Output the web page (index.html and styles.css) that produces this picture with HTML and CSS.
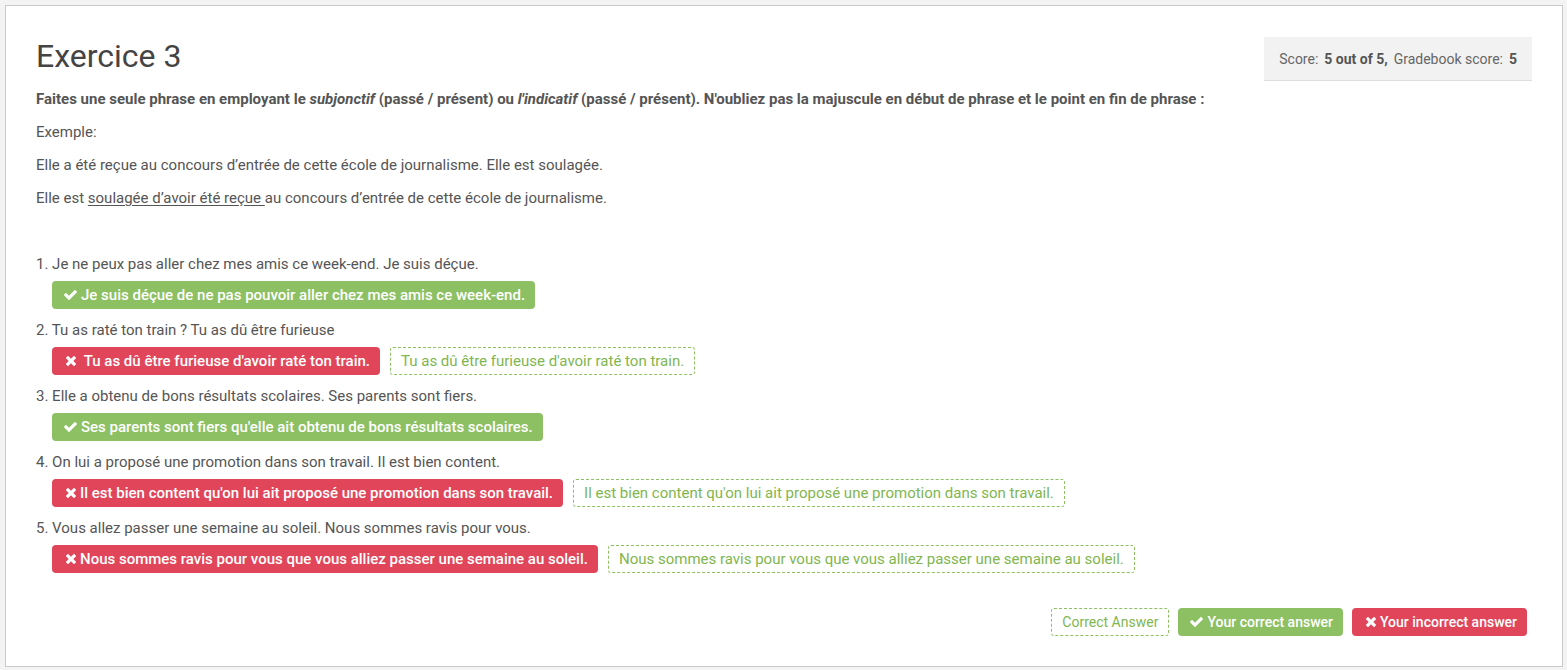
FILE: index.html
```html
<!DOCTYPE html>
<html lang="fr">
<head>
    <meta charset="UTF-8">
    <title>Exercice 3</title>
    <link rel="stylesheet" href="styles.css">
</head>
<body>
    <div class="frame">
        <div class="header">
            <h2 class="title">Exercice 3</h2>
            <div class="score">
                <span>Score:</span> <b>5 out of 5,</b> <span>Gradebook score:</span> <b>5</b>
            </div>
        </div>

        <p><strong>Faites une seule phrase en employant le <em>subjonctif</em> (passé / présent) ou <em>l'indicatif</em> (passé / présent). N'oubliez pas la majuscule en début de phrase et le point en fin de phrase :</strong></p>
        <p>Exemple:</p>
        <p>Elle a été reçue au concours d’entrée de cette école de journalisme. Elle est soulagée.</p>
        <p>Elle est <u>soulagée d’avoir été reçue </u>au concours d’entrée de cette école de journalisme.</p>
        <p>&nbsp;</p>

        <div class="questions">
            <div class="question">
                <div class="prompt">1. Je ne peux pas aller chez mes amis ce week-end. Je suis déçue.</div>
                <div class="answers">
                    <span class="badge correct">
                        <svg class="icon-check" viewBox="121 334 1550 1188"><path d="M1671 566q0 40-28 68l-724 724-136 136q-28 28-68 28t-68-28l-136-136-362-362q-28-28-28-68t28-68l136-136q28-28 68-28t68 28l294 295 656-657q28-28 68-28t68 28l136 136q28 28 28 68z"/></svg>Je suis déçue de ne pas pouvoir aller chez mes amis ce week-end.
                    </span>
                </div>
            </div>

            <div class="question">
                <div class="prompt">2. Tu as raté ton train ? Tu as dû être furieuse</div>
                <div class="answers">
                    <span class="badge wrong">
                        <svg class="icon-times" viewBox="302 366 1188 1188"><path d="M1490 1322q0 40-28 68l-136 136q-28 28-68 28t-68-28l-294-294-294 294q-28 28-68 28t-68-28l-136-136q-28-28-28-68t28-68l294-294-294-294q-28-28-28-68t28-68l136-136q28-28 68-28t68 28l294 294 294-294q28-28 68-28t68 28l136 136q28 28 28 68t-28 68l-294 294 294 294q28 28 28 68z"/></svg>&nbsp;Tu as dû être furieuse d'avoir raté ton train.
                    </span>
                    <span class="solution">Tu as dû être furieuse d'avoir raté ton train.</span>
                </div>
            </div>

            <div class="question">
                <div class="prompt">3. Elle a obtenu de bons résultats scolaires. Ses parents sont fiers.</div>
                <div class="answers">
                    <span class="badge correct">
                        <svg class="icon-check" viewBox="121 334 1550 1188"><path d="M1671 566q0 40-28 68l-724 724-136 136q-28 28-68 28t-68-28l-136-136-362-362q-28-28-28-68t28-68l136-136q28-28 68-28t68 28l294 295 656-657q28-28 68-28t68 28l136 136q28 28 28 68z"/></svg>Ses parents sont fiers qu'elle ait obtenu de bons résultats scolaires.
                    </span>
                </div>
            </div>

            <div class="question">
                <div class="prompt">4. On lui a proposé une promotion dans son travail. Il est bien content.</div>
                <div class="answers">
                    <span class="badge wrong">
                        <svg class="icon-times" viewBox="302 366 1188 1188"><path d="M1490 1322q0 40-28 68l-136 136q-28 28-68 28t-68-28l-294-294-294 294q-28 28-68 28t-68-28l-136-136q-28-28-28-68t28-68l294-294-294-294q-28-28-28-68t28-68l136-136q28-28 68-28t68 28l294 294 294-294q28-28 68-28t68 28l136 136q28 28 28 68t-28 68l-294 294 294 294q28 28 28 68z"/></svg>Il est bien content qu'on lui ait proposé une promotion dans son travail.
                    </span>
                    <span class="solution">Il est bien content qu'on lui ait proposé une promotion dans son travail.</span>
                </div>
            </div>

            <div class="question">
                <div class="prompt">5. Vous allez passer une semaine au soleil. Nous sommes ravis pour vous.</div>
                <div class="answers">
                    <span class="badge wrong">
                        <svg class="icon-times" viewBox="302 366 1188 1188"><path d="M1490 1322q0 40-28 68l-136 136q-28 28-68 28t-68-28l-294-294-294 294q-28 28-68 28t-68-28l-136-136q-28-28-28-68t28-68l294-294-294-294q-28-28-28-68t28-68l136-136q28-28 68-28t68 28l294 294 294-294q28-28 68-28t68 28l136 136q28 28 28 68t-28 68l-294 294 294 294q28 28 28 68z"/></svg>Nous sommes ravis pour vous que vous alliez passer une semaine au soleil.
                    </span>
                    <span class="solution">Nous sommes ravis pour vous que vous alliez passer une semaine au soleil.</span>
                </div>
            </div>
        </div>

        <div class="legend">
            <span class="solution">Correct Answer</span>
            <span class="badge correct">
                <svg class="icon-check" viewBox="121 334 1550 1188"><path d="M1671 566q0 40-28 68l-724 724-136 136q-28 28-68 28t-68-28l-136-136-362-362q-28-28-28-68t28-68l136-136q28-28 68-28t68 28l294 295 656-657q28-28 68-28t68 28l136 136q28 28 28 68z"/></svg>Your correct answer
            </span>
            <span class="badge wrong">
                <svg class="icon-times" viewBox="302 366 1188 1188"><path d="M1490 1322q0 40-28 68l-136 136q-28 28-68 28t-68-28l-294-294-294 294q-28 28-68 28t-68-28l-136-136q-28-28-28-68t28-68l294-294-294-294q-28-28-28-68t28-68l136-136q28-28 68-28t68 28l294 294 294-294q28-28 68-28t68 28l136 136q28 28 28 68t-28 68l-294 294 294 294q28 28 28 68z"/></svg>Your incorrect answer
            </span>
        </div>
    </div>
</body>
</html>
```

FILE: styles.css
```css
html, body {
    margin: 0;
    padding: 0;
    background-color: #F3F3F3;
    font-family: Roboto, "Liberation Sans", sans-serif;
    font-size: 15px;
    color: #555;
}

.frame {
    box-sizing: border-box;
    margin: 5px 4px 0 5px;
    height: 662px;
    padding: 31px 30px 30px 30px;
    background-color: #FFF;
    border: 1px solid #C9C9C9;
}

.header {
    display: flex;
    justify-content: space-between;
    align-items: flex-start;
    margin-bottom: 8px;
}

.title {
    margin: 0;
    font-size: 32px;
    line-height: 38px;
    font-weight: 400;
    color: #444;
}

.score {
    box-sizing: border-box;
    height: 44px;
    padding: 0 15px 0 15px;
    display: flex;
    align-items: center;
    gap: 6px;
    background-color: #F2F2F2;
    border-bottom: 1px solid #DDD;
    font-size: 14px;
    color: #666;
}

.score b {
    color: #555;
}

p {
    margin: 0 0 13px 0;
    line-height: 20px;
}

u {
    text-underline-offset: 2px;
}

.question {
    margin-bottom: 11px;
}

.prompt {
    line-height: 20px;
}

.answers {
    display: flex;
    gap: 10px;
    margin-top: 7px;
    padding-left: 16px;
}

.badge,
.solution {
    box-sizing: border-box;
    height: 28px;
    display: inline-flex;
    align-items: center;
    border-radius: 4px;
    white-space: nowrap;
}

.badge {
    padding: 0 10px 0 12px;
    color: #FFF;
    font-weight: 500;
}

.badge.correct {
    background-color: #8CC063;
}

.badge.wrong {
    background-color: #E0455A;
}

.badge svg {
    fill: #FFF;
    margin-right: 4px;
}

.icon-check {
    width: 13px;
    height: 10px;
}

.icon-times {
    width: 10px;
    height: 10px;
    margin-left: 2px;
}

.solution {
    padding: 0 10px;
    border: 1px dashed #8CC063;
    color: #7FB64F;
    border-radius: 3px;
}

.legend {
    display: flex;
    justify-content: flex-end;
    gap: 9px;
    margin-top: 35px;
    padding-right: 5px;
    font-size: 14px;
}
```
